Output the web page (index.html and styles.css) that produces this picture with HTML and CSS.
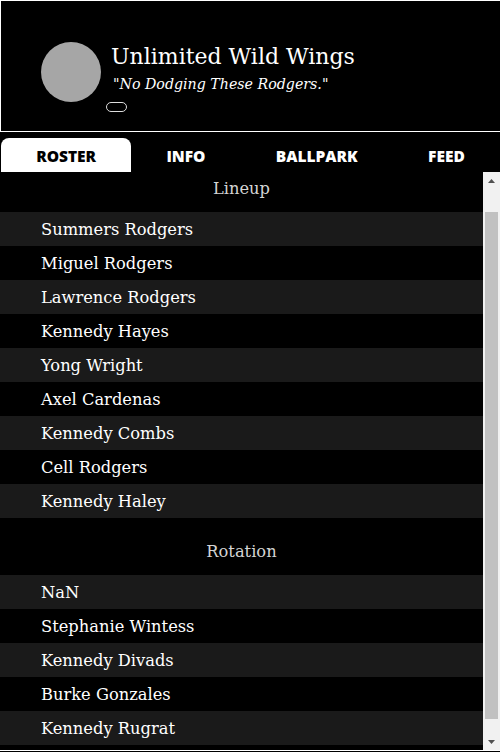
FILE: index.html
```html
<!DOCTYPE html>
<html lang="en">
<head>
<meta charset="utf-8">
<title>Unlimited Wild Wings</title>
<link rel="stylesheet" href="styles.css">
</head>
<body>
<div class="app">
  <header class="team-header">
    <div class="avatar"></div>
    <div class="team-text">
      <h1 class="team-name">Unlimited Wild Wings</h1>
      <p class="team-slogan">"No Dodging These Rodgers."</p>
      <span class="pill"></span>
    </div>
  </header>
  <nav class="tabs">
    <div class="tab active">ROSTER</div>
    <div class="tab">INFO</div>
    <div class="tab">BALLPARK</div>
    <div class="tab">FEED</div>
  </nav>
  <div class="content">
    <main class="roster">
      <section class="group">
        <div class="group-title">Lineup</div>
        <div class="player">Summers Rodgers</div>
        <div class="player">Miguel Rodgers</div>
        <div class="player">Lawrence Rodgers</div>
        <div class="player">Kennedy Hayes</div>
        <div class="player">Yong Wright</div>
        <div class="player">Axel Cardenas</div>
        <div class="player">Kennedy Combs</div>
        <div class="player">Cell Rodgers</div>
        <div class="player">Kennedy Haley</div>
      </section>
      <section class="group">
        <div class="group-title">Rotation</div>
        <div class="player">NaN</div>
        <div class="player">Stephanie Wintess</div>
        <div class="player">Kennedy Divads</div>
        <div class="player">Burke Gonzales</div>
        <div class="player">Kennedy Rugrat</div>
      </section>
    </main>
    <div class="scrollbar" aria-hidden="true">
      <div class="sb-button">
        <svg width="7" height="4" viewBox="0 0 7 4"><polygon points="0,4 7,4 3.5,0" fill="#505050"/></svg>
      </div>
      <div class="sb-space-top"></div>
      <div class="sb-thumb"></div>
      <div class="sb-space"></div>
      <div class="sb-button">
        <svg width="7" height="4" viewBox="0 0 7 4"><polygon points="0,0 7,0 3.5,4" fill="#505050"/></svg>
      </div>
    </div>
  </div>
</div>
</body>
</html>
```

FILE: styles.css
```css
html, body {
  margin: 0;
  padding: 0;
  background: #000;
  height: 752px;
  overflow: hidden;
}

.app {
  display: flex;
  flex-direction: column;
  height: 751px;
  font-family: "DejaVu Serif", serif;
  color: #fff;
}

.team-header {
  border-top: 1px solid #fff;
  border-left: 1px solid #fff;
  border-bottom: 1px solid #fff;
  display: flex;
  align-items: flex-start;
  padding: 41px 0 0 40px;
  height: 89px;
  gap: 10px;
  flex: none;
}

.avatar {
  width: 60px;
  height: 60px;
  border-radius: 50%;
  background: #a6a6a6;
  flex: none;
}

.team-text {
  display: flex;
  flex-direction: column;
  align-items: flex-start;
}

.team-name {
  margin: 0;
  font-size: 22px;
  font-weight: normal;
  line-height: 30px;
}

.team-slogan {
  margin: 2px 0 0 2px;
  font-size: 14.2px;
  font-style: italic;
  line-height: 20px;
}

.pill {
  display: block;
  width: 19px;
  height: 8px;
  border: 1px solid #ddd;
  border-radius: 5px;
  margin: 8px 0 0 -5px;
}

.tabs {
  display: flex;
  padding-top: 6px;
  padding-left: 1px;
  height: 34px;
  flex: none;
}

.tab {
  flex: 1 1 auto;
  text-align: center;
  font-family: "Open Sans", sans-serif;
  font-weight: 800;
  font-size: 15.5px;
  line-height: 32px;
  padding-top: 2px;
  color: #fff;
}

.tab.active {
  background: #fff;
  color: #000;
  border-radius: 8px 8px 0 0;
}

.content {
  flex: 1;
  display: flex;
  min-height: 0;
  border-bottom: 1px solid #fff;
}

.roster {
  flex: 1;
  overflow: hidden;
}

.group + .group {
  margin-top: 17px;
}

.group-title {
  height: 40px;
  line-height: 33px;
  text-align: center;
  font-size: 16.3px;
  color: #d4d4d4;
}

.player {
  height: 33px;
  line-height: 33px;
  padding-top: 1px;
  padding-left: 41px;
  font-size: 16.3px;
  color: #fff;
}

.group .player:nth-child(even) {
  background: #1a1a1a;
}

.scrollbar {
  width: 17px;
  flex: none;
  background: #f1f1f1;
  display: flex;
  flex-direction: column;
  align-items: center;
}

.sb-button {
  height: 17px;
  width: 17px;
  display: flex;
  align-items: center;
  justify-content: center;
  flex: none;
}

.sb-space-top {
  height: 23px;
  flex: none;
}

.sb-thumb {
  width: 13px;
  height: 507px;
  background: #c1c1c1;
  flex: none;
}

.sb-space {
  flex: 1;
}
```
